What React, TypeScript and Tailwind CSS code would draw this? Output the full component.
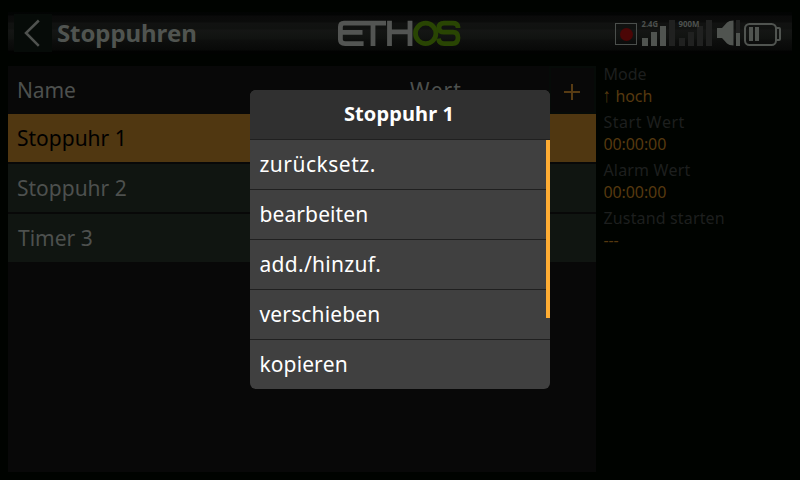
import React from "react";

const menuItems = [
  { label: "zurücksetz.", tracking: "tracking-[0.5px]" },
  { label: "bearbeiten", tracking: "tracking-[0.1px]" },
  { label: "add./hinzuf.", tracking: "tracking-[0.3px]" },
  { label: "verschieben", tracking: "tracking-[0.15px]" },
  { label: "kopieren", tracking: "tracking-[0.1px]" },
];

const details = [
  { label: "Mode", value: "hoch", arrow: true, tracking: "tracking-[0px]" },
  { label: "Start Wert", value: "00:00:00", tracking: "tracking-[0.5px]" },
  { label: "Alarm Wert", value: "00:00:00", tracking: "tracking-[0.15px]" },
  { label: "Zustand starten", value: "---", tracking: "tracking-[0.15px]" },
];

function EthosLogo() {
  return (
    <svg width="126" height="28" viewBox="337 19 126 28" fill="none" strokeWidth="4.8">
      <g stroke="#535553">
        <path d="M386 23.2H344Q340.4 23.2 340.4 27V39.5Q340.4 43.6 345 43.6H363.6M340.4 32.4H362.5M373 23.2V46" />
        <path d="M389.5 20.8V46M410 20.8V46M389.5 31.8H410" />
      </g>
      <g stroke="#294503">
        <circle cx="425.7" cy="33.4" r="10.2" />
        <path d="M458 28V27Q457.5 23.2 453 23.2H444Q439 23.2 439 27.5Q439 32.2 444 32.2H453Q458 32.2 458 37.8Q458 43.6 452.5 43.6H444Q439 43.6 438.5 38.5" />
      </g>
    </svg>
  );
}

function StatusIcons() {
  return (
    <svg width="170" height="32" viewBox="613 17 170 32" fill="none">
      <rect x="615.5" y="23.5" width="21" height="21" stroke="#4b4f4c" />
      <circle cx="626.5" cy="34.5" r="6.5" fill="#4b0606" />
      <path d="M669 20h6v26h-6zM679 38h6v8h-6zM688 32h6v14h-6zM697 26h6v20h-6zM706 20h6v26h-6zM736 20h4v13h-4z" fill="#202120" />
      <text x="641.5" y="26.5" fontFamily="Noto Sans, sans-serif" fontSize="8.5" fontWeight="700" fill="#4d514e" textLength="16.5" lengthAdjust="spacingAndGlyphs">2.4G</text>
      <text x="678.5" y="26.5" fontFamily="Noto Sans, sans-serif" fontSize="8.5" fontWeight="700" fill="#4d514e" textLength="21" lengthAdjust="spacingAndGlyphs">900M</text>
      <g fill="#505450">
        <path d="M642 38h6v8h-6zM651 32h6v14h-6zM660 26h6v20h-6z" />
        <path d="M717 28h5l5-5.5q2-2 6.500-2v25q-4.500 0-6.500-2l-5-5.500h-5z" />
        <path d="M736 33h4v13h-4zM749 27h4v14h-4zM755 27h4v14h-4z" />
      </g>
      <rect x="745" y="24" width="31" height="21" rx="4.500" stroke="#505450" strokeWidth="2" />
      <path d="M776 28h3q1 0 1 1v10q0 1-1 1h-3" stroke="#505450" strokeWidth="2" />
    </svg>
  );
}

function Header() {
  return (
    <header className="flex h-[42px] items-center bg-[linear-gradient(#020403_0px,#030404_3px,#0a0a0a_4px,#0b0c0b_10px,#111211_11px,#101210_17px,#151615_18px,#111311_26px,#0d0e0d_29px,#080908_38px,#010201_39px)]">
      <button className="ml-1.5 flex h-[38px] w-[38px] items-center justify-center bg-[#060b08]">
        <svg width="38" height="38" fill="none" stroke="#4f524f" strokeWidth="2.5">
          <path d="M24.800 6.500L12 19L24.800 31.800" />
        </svg>
      </button>
      <h1 className="ml-[5px] w-[280px] whitespace-nowrap pb-px text-2xl leading-8 font-bold tracking-[-0.1px] text-[#505450]">Stoppuhren</h1>
      <div className="h-[28px] w-[126px]"><EthosLogo /></div>
      <div className="ml-auto mr-[9px] h-8 w-[170px]"><StatusIcons /></div>
    </header>
  );
}

function TimerTable() {
  return (
    <section className="h-[406px] w-[588px] bg-[#080808] text-[21px] leading-7 text-[#4d504e]">
      <div className="flex h-12 items-center">
        <span className="w-[402px] pl-[9px] tracking-[-0.15px]">Name</span>
        <span className="w-[139px] tracking-[1.1px]">Wert</span>
        <button className="flex h-12 w-[47px] items-center justify-center border-[2px] border-[#060b08] pr-px pt-1">
          <svg width="16" height="16" stroke="#573b13" strokeWidth="2"><path d="M0 8H16M8 0V16" /></svg>
        </button>
      </div>
      <div className="flex flex-col gap-0.5">
        <div className="flex h-12 items-center bg-[#503711] pl-[9px] text-black">Stoppuhr 1</div>
        <div className="flex h-12 items-center bg-[#101511] pl-[9px]">Stoppuhr 2</div>
        <div className="flex h-12 items-center bg-[#101511] pl-2.5">Timer 3</div>
      </div>
    </section>
  );
}

function Details() {
  return (
    <aside className="-mt-0.5 w-[196px] pl-[7.5px] text-base">
      {details.map((item) => (
        <div key={item.label} className="h-12">
          <div className={`h-[21px] whitespace-nowrap leading-[21px] text-[#1d1f1e] ${item.tracking}`}>{item.label}</div>
          <div className="flex h-[22px] leading-[22px] tracking-[-0.1px] text-[#56390f]">
            {item.arrow && <span className="-mt-px w-[12px] origin-center -translate-x-px scale-y-[1.25]">↑</span>}
            {item.value}
          </div>
        </div>
      ))}
    </aside>
  );
}

function ActionMenu() {
  return (
    <div className="absolute left-[250px] top-[90px] flex h-[299px] w-[300px] flex-col overflow-hidden rounded-[6px] bg-[#404040] text-white">
      <h2 className="flex h-[50px] shrink-0 items-center justify-center border-b border-[#202020] bg-[#303030] pb-px pr-[2px] text-xl font-bold tracking-[0.1px]">Stoppuhr 1</h2>
      <div className="relative text-[21px] leading-7">
        {menuItems.map((item) => (
          <div key={item.label} className={`flex h-[50px] items-center border-b border-[#202020] pb-px pl-[9.5px] ${item.tracking}`}>
            {item.label}
          </div>
        ))}
        <div className="absolute right-0 top-0 h-[178px] w-1 bg-[#ffad33]" />
      </div>
    </div>
  );
}

export default function App() {
  return (
    <div className="relative h-[480px] w-[800px] overflow-hidden bg-[#000300] px-2 pt-3 font-['Noto_Sans',sans-serif] [font-kerning:none]">
      <Header />
      <main className="mt-3 flex">
        <TimerTable />
        <Details />
      </main>
      <ActionMenu />
    </div>
  );
}
